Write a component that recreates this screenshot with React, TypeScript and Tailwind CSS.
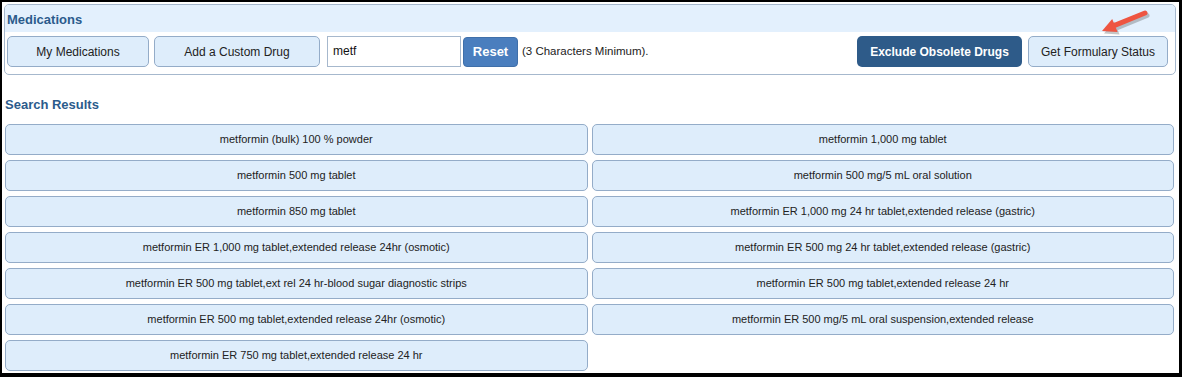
import React from "react";

const results = [
  "metformin (bulk) 100 % powder",
  "metformin 1,000 mg tablet",
  "metformin 500 mg tablet",
  "metformin 500 mg/5 mL oral solution",
  "metformin 850 mg tablet",
  "metformin ER 1,000 mg 24 hr tablet,extended release (gastric)",
  "metformin ER 1,000 mg tablet,extended release 24hr (osmotic)",
  "metformin ER 500 mg 24 hr tablet,extended release (gastric)",
  "metformin ER 500 mg tablet,ext rel 24 hr-blood sugar diagnostic strips",
  "metformin ER 500 mg tablet,extended release 24 hr",
  "metformin ER 500 mg tablet,extended release 24hr (osmotic)",
  "metformin ER 500 mg/5 mL oral suspension,extended release",
  "metformin ER 750 mg tablet,extended release 24 hr",
];

const lightBtn =
  "h-[31px] rounded-[5px] border border-[#94acc8] bg-[#deedfb] text-[12px] text-[#222] flex items-center justify-center shrink-0";

export default function App() {
  return (
    <div
      className="relative w-[1182px] h-[377px] bg-white border-t-2 border-l-2 border-r-[3px] border-b-[4px] border-black flex flex-col"
      style={{ fontFamily: '"Liberation Sans", Arial, sans-serif' }}
    >
      <div className="mt-[2px] ml-[2px] mr-[3px] border border-[#a6b8cd] rounded-[5px] overflow-hidden">
        <div className="h-[27px] bg-[#e3f0fd] flex items-center pl-[2px] pt-[2px]">
          <span className="text-[13px] font-bold text-[#2b5b8c]">Medications</span>
        </div>
        <div className="flex items-center pl-[2px] pr-[7px] pt-[4px] pb-[7px]">
          <div className={lightBtn + " w-[142px]"}>My Medications</div>
          <div className={lightBtn + " w-[166px] ml-[5px]"}>Add a Custom Drug</div>
          <div className="ml-[7px] w-[134px] h-[31px] border border-[#a6b8cd] bg-white flex items-center pl-[5px] text-[12px] text-[#111] -mt-[1px]">
            metf
          </div>
          <div className="ml-[2px] w-[55px] h-[30px] rounded-[4px] bg-[#4a7ebe] border border-[#3f6fa9] text-white font-bold text-[13px] flex items-center justify-center mt-[1px]">
            Reset
          </div>
          <span className="ml-[4px] text-[11.5px] text-[#222]">(3 Characters Minimum).</span>
          <div className="flex-1" />
          <div className="w-[165px] h-[31px] rounded-[5px] bg-[#2e5b89] text-white font-bold text-[12px] flex items-center justify-center">
            Exclude Obsolete Drugs
          </div>
          <div className={lightBtn + " w-[140px] ml-[6px]"}>Get Formulary Status</div>
        </div>
      </div>

      <div className="pl-[3px] mt-[23px] h-[14px] flex items-center">
        <span className="text-[13px] font-bold text-[#2b5b8c]">Search Results</span>
      </div>

      <div className="mt-[12px] ml-[3px] mr-[5px] grid grid-cols-2 gap-x-[4px] gap-y-[5px]">
        {results.map((r) => (
          <div
            key={r}
            className="h-[31px] rounded-[5px] border border-[#94acc8] bg-[#deedfb] text-[11px] text-[#222] flex items-center justify-center"
          >
            {r}
          </div>
        ))}
      </div>

      <svg
        className="absolute left-[1092px] top-[2px]"
        width="64"
        height="36"
        viewBox="0 0 64 36"
      >
        <g opacity="0.3" transform="translate(2,2.5)">
          <line x1="51" y1="9" x2="20" y2="21.6" stroke="#444" strokeWidth="5" strokeLinecap="round" />
          <polygon points="8,27 18.2,15.1 23.6,28.1" fill="#444" />
        </g>
        <line x1="51" y1="9" x2="20" y2="21.6" stroke="#ee5541" strokeWidth="5" strokeLinecap="round" />
        <polygon points="8,27 18.2,15.1 23.6,28.1" fill="#ee5541" />
      </svg>
    </div>
  );
}
